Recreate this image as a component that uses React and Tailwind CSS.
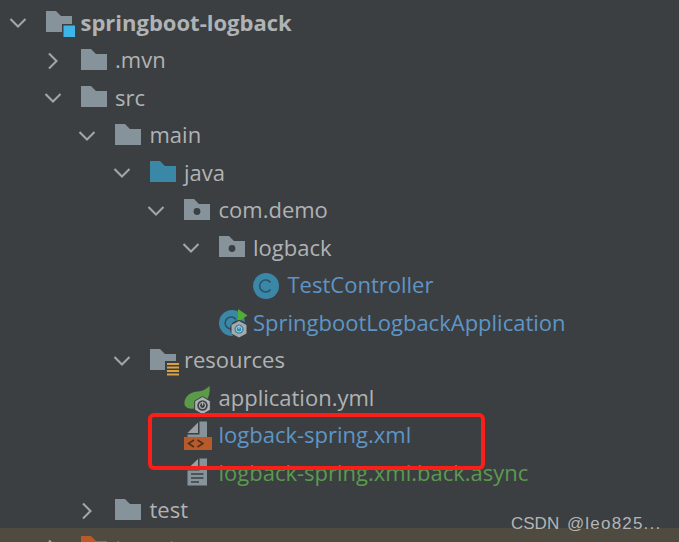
const FONT = "font-['Open_Sans','Noto_Sans',sans-serif]";

function Chevron({ dir }) {
  if (!dir) return <span className="block w-[26px] h-[26px]" />;
  return (
    <svg viewBox="0 0 26 26" className="block w-[26px] h-[26px]" fill="none" stroke="#a3a6a8" strokeWidth="2.1">
      {dir === "down" ? <path d="M5.5 9 L13 16.5 L20.5 9" /> : <path d="M9 5.5 L16.5 13 L9 20.5" />}
    </svg>
  );
}

const FOLDER = "M0 0 H10 L15 5 H26 V21 H0 Z";

function Folder({ color = "#87939a", children }) {
  return (
    <svg viewBox="0 -3 30 30" className="block w-[30px] h-[30px] overflow-visible" >
      <path d={FOLDER} fill={color} />
      {children}
    </svg>
  );
}

function Root() {
  return (
    <Folder>
      <rect x="16" y="13" width="14" height="14" fill="#3c3f41" />
      <rect x="17.5" y="14.5" width="11.5" height="11.5" fill="#3db5e6" />
    </Folder>
  );
}

function Pkg() {
  return (
    <Folder>
      <circle cx="13" cy="12.5" r="3.4" fill="#3c3f41" />
    </Folder>
  );
}

function ResFolder() {
  return (
    <Folder>
      <rect x="15" y="12" width="15" height="15" fill="#3c3f41" />
      <path d="M17 15 H29 M17 18.5 H29 M17 22 H29 M17 25.5 H29" stroke="#d9a23e" strokeWidth="1.9" />
    </Folder>
  );
}

function ClassIcon() {
  return (
    <svg viewBox="0 0 30 30" className="block w-[30px] h-[30px]">
      <circle cx="13" cy="15" r="13" fill="#3b87a7" />
      <path d="M17.5 11.5 A6 6 0 1 0 17.5 18.5" fill="none" stroke="#2c5266" strokeWidth="1.6" />
    </svg>
  );
}

function Gear({ cx, cy, r = 8 }) {
  const h = r * 0.87;
  return (
    <g>
      <path
        d={`M${cx} ${cy - r} L${cx + h} ${cy - r / 2} V${cy + r / 2} L${cx} ${cy + r} L${cx - h} ${cy + r / 2} V${cy - r / 2} Z`}
        fill="#aeb2b5"
        stroke="#3c3f41"
        strokeWidth="1"
      />
      <circle cx={cx} cy={cy} r={r * 0.58} fill="#3c3f41" />
      <circle cx={cx} cy={cy} r={r * 0.33} fill="none" stroke="#aeb2b5" strokeWidth="1.1" />
      <path d={`M${cx} ${cy - r * 0.45} V${cy}`} stroke="#aeb2b5" strokeWidth="1.1" />
    </g>
  );
}

function SpringApp() {
  return (
    <svg viewBox="0 0 30 30" className="block w-[30px] h-[30px] overflow-visible">
      <circle cx="13" cy="15" r="13" fill="#3b87a7" />
      <path d="M17 11.5 A6 6 0 1 0 17 18.5" fill="none" stroke="#2c5266" strokeWidth="1.6" />
      <path d="M19 1 L28.5 7.5 L19 14 Z" fill="#4fae35" />
      <circle cx="20" cy="21" r="9" fill="#3c3f41" />
      <path d="M20 13 L27.5 17 V25.5 L20 29.5 L12.5 25.5 V17 Z" fill="#a6aaad" />
      <circle cx="20" cy="21.2" r="4.6" fill="#3b87a7" />
      <circle cx="20" cy="21.2" r="2.8" fill="none" stroke="#a6d0e0" strokeWidth="1" />
      <path d="M20 17.5 V21" stroke="#a6d0e0" strokeWidth="1" />
    </svg>
  );
}

function Yml() {
  return (
    <svg viewBox="0 0 30 30" className="block w-[30px] h-[30px] overflow-visible">
      <path d="M0.5 22 C-0.5 13 7 9 14 8.5 C18 8 22 6.5 25.5 3 C26.5 11 24 18 18 22 C13 26 4 28 0.5 22 Z" fill="#5a9b47" />
      <Gear cx={18.5} cy={22.5} r={9} />
    </svg>
  );
}

function Xml() {
  return (
    <svg viewBox="0 0 30 30" className="block w-[30px] h-[30px] overflow-visible">
      <path d="M3.5 12 L14 1.5 V12 Z" fill="#9aa0a4" />
      <path d="M15.5 0.5 H23 V16 H3.5 V13.5 H15.5 Z" fill="#87939a" />
      <rect x="0" y="16" width="28" height="13" fill="#b85a2a" />
      <path d="M10 19 L4.5 22.5 L10 26 M13.5 19 L19 22.5 L13.5 26" fill="none" stroke="#4f2d1c" strokeWidth="1.5" />
    </svg>
  );
}

function TextFile() {
  return (
    <svg viewBox="0 0 30 30" className="block w-[30px] h-[30px] overflow-visible">
      <path d="M3.5 11 L14 1 V11 Z" fill="#9aa0a4" />
      <path d="M15.5 0.5 H23 V27.5 H3.5 V12.5 H15.5 Z" fill="#87939a" />
      <path d="M7 16 H19.5 M7 20 H19.5 M7 24 H15" stroke="#3c3f41" strokeWidth="1.7" />
    </svg>
  );
}

const GRAY = "text-[#b0b3b5]";
const BLUE = "text-[#5e95c6]";
const GREEN = "text-[#5a9a4f]";

const rows = [
  { pl: "pl-[5px]", chev: "down", icon: <Root />, label: "springboot-logback", color: GRAY, bold: true },
  { pl: "pl-[39.5px]", chev: "right", icon: <Folder />, label: ".mvn", color: GRAY },
  { pl: "pl-[39.5px]", chev: "down", icon: <Folder />, label: "src", color: GRAY },
  { pl: "pl-[74px]", chev: "down", icon: <Folder />, label: "main", color: GRAY },
  { pl: "pl-[108.5px]", chev: "down", icon: <Folder color="#3a87a6" />, label: "java", color: GRAY },
  { pl: "pl-[143px]", chev: "down", icon: <Pkg />, label: "com.demo", color: GRAY },
  { pl: "pl-[177.5px]", chev: "down", icon: <Pkg />, label: "logback", color: GRAY },
  { pl: "pl-[212px]", icon: <ClassIcon />, label: "TestController", color: BLUE },
  { pl: "pl-[177.5px]", icon: <SpringApp />, label: "SpringbootLogbackApplication", color: BLUE },
  { pl: "pl-[108.5px]", chev: "down", icon: <ResFolder />, label: "resources", color: GRAY },
  { pl: "pl-[143px]", icon: <Yml />, label: "application.yml", color: GRAY },
  { pl: "pl-[143px]", icon: <Xml />, label: "logback-spring.xml", color: BLUE },
  { pl: "pl-[143px]", icon: <TextFile />, label: "logback-spring.xml.back.async", color: GREEN },
  { pl: "pl-[74px]", chev: "right", icon: <Folder />, label: "test", color: GRAY },
];

function Row({ pl, chev, icon, label, color, bold }) {
  return (
    <div className={`flex items-center h-[37.5px] ${pl}`}>
      <span className="w-[41px] shrink-0">
        <Chevron dir={chev} />
      </span>
      <span className="w-[34.5px] shrink-0">{icon}</span>
      <span className={`text-[22px] leading-none pb-[3px] whitespace-nowrap ${color} ${bold ? "font-bold" : "font-normal"}`}>
        {label}
      </span>
    </div>
  );
}

export default function App() {
  return (
    <div className={`relative w-[679px] h-[542px] overflow-hidden bg-[#3c3f41] pt-[4.25px] ${FONT}`}>
      {rows.map((r) => (
        <Row key={r.label} {...r} />
      ))}
      <div className="flex items-center h-[39px] -mt-[1.25px] pt-[1.5px] pl-[39.5px] bg-[#4f4b41]">
        <span className="w-[41px] shrink-0">
          <Chevron dir="right" />
        </span>
        <span className="w-[34.5px] shrink-0">
          <Folder color="#b85a2a" />
        </span>
        <span className={`text-[22px] leading-none pb-[3px] ${GRAY}`}>target</span>
      </div>
      <div className="absolute left-[148px] top-[413px] w-[337px] h-[57px] border-[4px] border-[#fb1f1a] rounded-[6px]" />
      <div className="absolute left-[511px] top-[512px] text-[17px] leading-[24px] [word-spacing:3px] whitespace-nowrap text-[#b5b5b5] font-['Liberation_Sans',sans-serif]">
        CSDN <span className="tracking-[1.2px]">@leo825...</span>
      </div>
    </div>
  );
}
